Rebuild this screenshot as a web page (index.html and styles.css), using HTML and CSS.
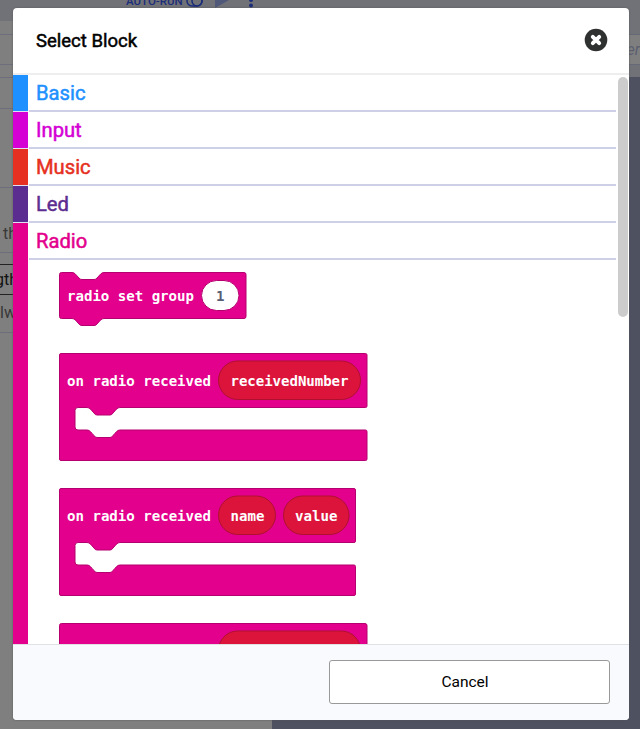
FILE: index.html
```html
<!DOCTYPE html>
<html lang="en">
<head>
<meta charset="utf-8">
<title>Select Block</title>
<link rel="stylesheet" href="styles.css">
</head>
<body>
<div class="workspace">
  <div class="toolbar">
    <span class="autorun">AUTO-RUN</span>
    <svg class="tools" width="70" height="12" viewBox="0 0 70 12"><rect x="1" y="-4" width="15" height="10" rx="5" fill="none" stroke="#1b2c78" stroke-width="1.5"/><circle cx="11" cy="1" r="5" fill="none" stroke="#1b2c78" stroke-width="1.5"/><path d="M29-6V8L43 0Z" fill="#50587a"/><circle cx="65" cy="0" r="2" fill="#1b2c78"/><circle cx="65" cy="5.500" r="2" fill="#1b2c78"/></svg>
  </div>
  <div class="panels">
    <div class="editor">
      <div class="line l1"></div><div class="line l2"></div><div class="line l3"></div><div class="line l4"></div><div class="line l5"></div>
      <div class="line l6">th</div>
      <div class="gap"></div>
      <div class="line active">gth</div>
      <div class="line l7">lw</div>
    </div>
    <div class="stage"><div class="strip"></div><div class="field">er</div><div class="strip low"></div></div>
  </div>
</div>
<div class="modal">
  <header class="modal-head">
    <h1>Select Block</h1>
    <svg width="24" height="24" viewBox="0 0 24 24"><circle cx="12" cy="12" r="11.300" fill="#2f3030"/><path d="M8.800 8.800l6.400 6.400M15.200 8.800l-6.400 6.400" stroke="#fff" stroke-width="3.900" stroke-linecap="round"/></svg>
  </header>
  <main class="modal-body">
    <div class="list">
      <section class="cat basic"><h2>Basic</h2></section>
      <section class="cat input"><h2>Input</h2></section>
      <section class="cat music"><h2>Music</h2></section>
      <section class="cat led"><h2>Led</h2></section>
      <section class="cat radio"><h2>Radio</h2>
        <div class="blocks">
          <svg class="block" width="190" height="56" viewBox="0 0 190 56">
            <path class="shape" d="M2.500.5H13C16 .5 17 3 20 6Q21 7.500 23 7.500H35Q37 7.500 38 6C41 3 42 .5 45 .5H185Q187 .5 187 2.500V44.500Q187 46.500 185 46.500H45C42 46.500 41 49 38 52Q37 53.500 35 53.500H23Q21 53.500 20 52C17 49 16 46.500 13 46.500H2.500Q.5 46.500 .5 44.500V2.500Q.5.5 2.500.5Z"/>
            <text x="8" y="28.500" textLength="127">radio set group</text>
            <rect class="num" x="142.500" y="8.500" width="37.500" height="30" rx="15"/><text class="dark" x="157" y="28.500">1</text>
          </svg>
          <svg class="block" width="310" height="110" viewBox="0 0 310 110">
            <path class="shape" d="M2 .5H306.500Q308 .5 308 2V53Q308 54.500 306.500 54.500H61C58 54.500 57 57 54 60Q53 62 51 62H38Q36 62 35 60C32 57 31 54.500 28 54.500H19Q16 54.500 16 57.500V74Q16 77 19 77H28C31 77 32 79.500 35 82.500Q36 84.500 38 84.500H51Q53 84.500 54 82.500C57 79.500 58 77 61 77H306.500Q308 77 308 78.500V106Q308 107.500 306.500 107.500H2Q.5 107.500 .5 106V2Q.5.5 2 .5Z"/>
            <text x="8" y="32.500" textLength="144">on radio received</text>
            <rect class="var" x="159.500" y="8" width="142" height="38.500" rx="19.250"/><text x="171.500" y="32.500" textLength="118">receivedNumber</text>
          </svg>
          <svg class="block" width="310" height="110" viewBox="0 0 310 110">
            <path class="shape" d="M2 .5H295Q296.500 .5 296.500 2V53Q296.500 54.500 295 54.500H61C58 54.500 57 57 54 60Q53 62 51 62H38Q36 62 35 60C32 57 31 54.500 28 54.500H19Q16 54.500 16 57.500V74Q16 77 19 77H28C31 77 32 79.500 35 82.500Q36 84.500 38 84.500H51Q53 84.500 54 82.500C57 79.500 58 77 61 77H295Q296.500 77 296.500 78.500V106Q296.500 107.500 295 107.500H2Q.5 107.500 .5 106V2Q.5.5 2 .5Z"/>
            <text x="8" y="32.500" textLength="144">on radio received</text>
            <rect class="var" x="159.500" y="8" width="57" height="38.500" rx="19.250"/><text x="171.500" y="32.500" textLength="34">name</text>
            <rect class="var" x="224.500" y="8" width="65.500" height="38.500" rx="19.250"/><text x="236" y="32.500" textLength="42.500">value</text>
          </svg>
          <svg class="block" width="310" height="110" viewBox="0 0 310 110">
            <rect class="shape" x=".5" y=".5" width="307.500" height="108" rx="2"/>
            <rect class="var" x="159.500" y="8" width="142" height="38.500" rx="19.250"/>
          </svg>
        </div>
      </section>
    </div>
    <div class="scroll"></div>
  </main>
  <footer class="modal-foot"><button>Cancel</button></footer>
</div>
</body>
</html>
```
FILE: styles.css
```css
* { box-sizing: border-box; }
body { margin: 0; width: 640px; height: 729px; overflow: hidden; position: relative; font-family: Roboto, sans-serif; }
.workspace { height: 729px; display: flex; flex-direction: column; background: #7f7f7f; }
.toolbar { height: 21px; flex: none; background: #717278; display: flex; padding-left: 126px; overflow: hidden; }
.autorun { font-size: 11.500px; font-weight: 500; line-height: 12px; margin-top: -5px; color: #1b2c78; width: 60px; white-space: nowrap; }
.panels { flex: 1; display: grid; grid-template-columns: 272px 1fr; }
.editor { overflow: hidden; font-size: 16px; color: #383838; }
.line { border-bottom: 1px solid #6c6e7c; line-height: 20px; white-space: nowrap; }
.l1 { height: 14px; } .l2 { height: 30px; } .l3 { height: 13px; } .l4 { height: 31px; } .l5 { height: 79px; }
.l6 { height: 65px; padding: 36px 0 0 3px; }
.gap { height: 11px; }
.active { height: 31px; border-top: 1px solid #222; border-bottom-color: #222; padding-top: 5px; color: #111; text-indent: -5px; }
.l7 { height: 38px; padding-top: 8px; }
.stage { background: #4e5160; }
.strip { height: 14px; background: #717278; border-bottom: 1px solid #666978; }
.field { height: 30px; text-align: right; font-size: 16px; font-style: italic; line-height: 29px; color: #5b6070; background: #7f7f7f; border-bottom: 1px solid #666978; }
.strip.low { height: 12px; border: 0; }
.modal { position: absolute; left: 13px; top: 8px; width: 616px; height: 712px; background: #fff; border-radius: 4px; overflow: hidden; display: flex; flex-direction: column; box-shadow: 0 0 2px #555; }
.modal-head { height: 67px; flex: none; padding: 0 21.500px 0 23px; display: flex; align-items: center; justify-content: space-between; border-bottom: 2px solid #eee; }
h1 { margin: 1px 0 0; font-size: 18.500px; font-weight: 400; -webkit-text-stroke: .5px; color: #000; }
.modal-head svg { margin-top: -1px; }
.modal-body { height: 569px; flex: none; overflow: hidden; display: flex; }
.list { width: 603px; }
.cat { height: 37px; display: grid; grid-template-columns: 15px 1fr; grid-template-rows: 37px; column-gap: 1px; }
.cat::before { content: ""; background: currentColor; border-bottom: 1px solid #dfe1f2; }
h2 { margin: 0; height: 37px; padding-left: 7px; font-size: 20.200px; font-weight: 400; -webkit-text-stroke: .5px; line-height: 37px; border-bottom: 2px solid #cdd0e6; }
.basic { color: #1e90ff; } .input { color: #d400d4; } .music { color: #e63022; } .led { color: #5c2d91; }
.radio { color: #e3008c; height: 540px; grid-template-rows: 37px auto; }
.radio::before { grid-row: 1 / 3; border: 0; }
.blocks { grid-column: 2; padding: 12px 0 0 30px; display: flex; flex-direction: column; gap: 25px; }
.block { display: block; flex: none; }
.shape { fill: #e3008c; stroke: #b6006f; stroke-width: 1; }
.var { fill: #dc143c; stroke: #b01030; }
.num { fill: #fff; stroke: #b6006f; }
text { font: bold 14.100px "DejaVu Sans Mono", monospace; fill: #fff; }
.dark { fill: #575e75; }
.scroll { width: 10px; height: 240px; margin: 2px 0 0 1.500px; background: #ccc; border-radius: 5px; }
.modal-foot { flex: 1; border-top: 1px solid #dfe1e3; background: #f8fafd; padding: 15px 19px 0 0; display: flex; justify-content: flex-end; }
button { width: 281px; height: 44px; border: 1px solid #999; border-radius: 3px; background: #fff; font: 15.500px Roboto, sans-serif; color: #000; padding: 0 9px 1px 0; }
```
